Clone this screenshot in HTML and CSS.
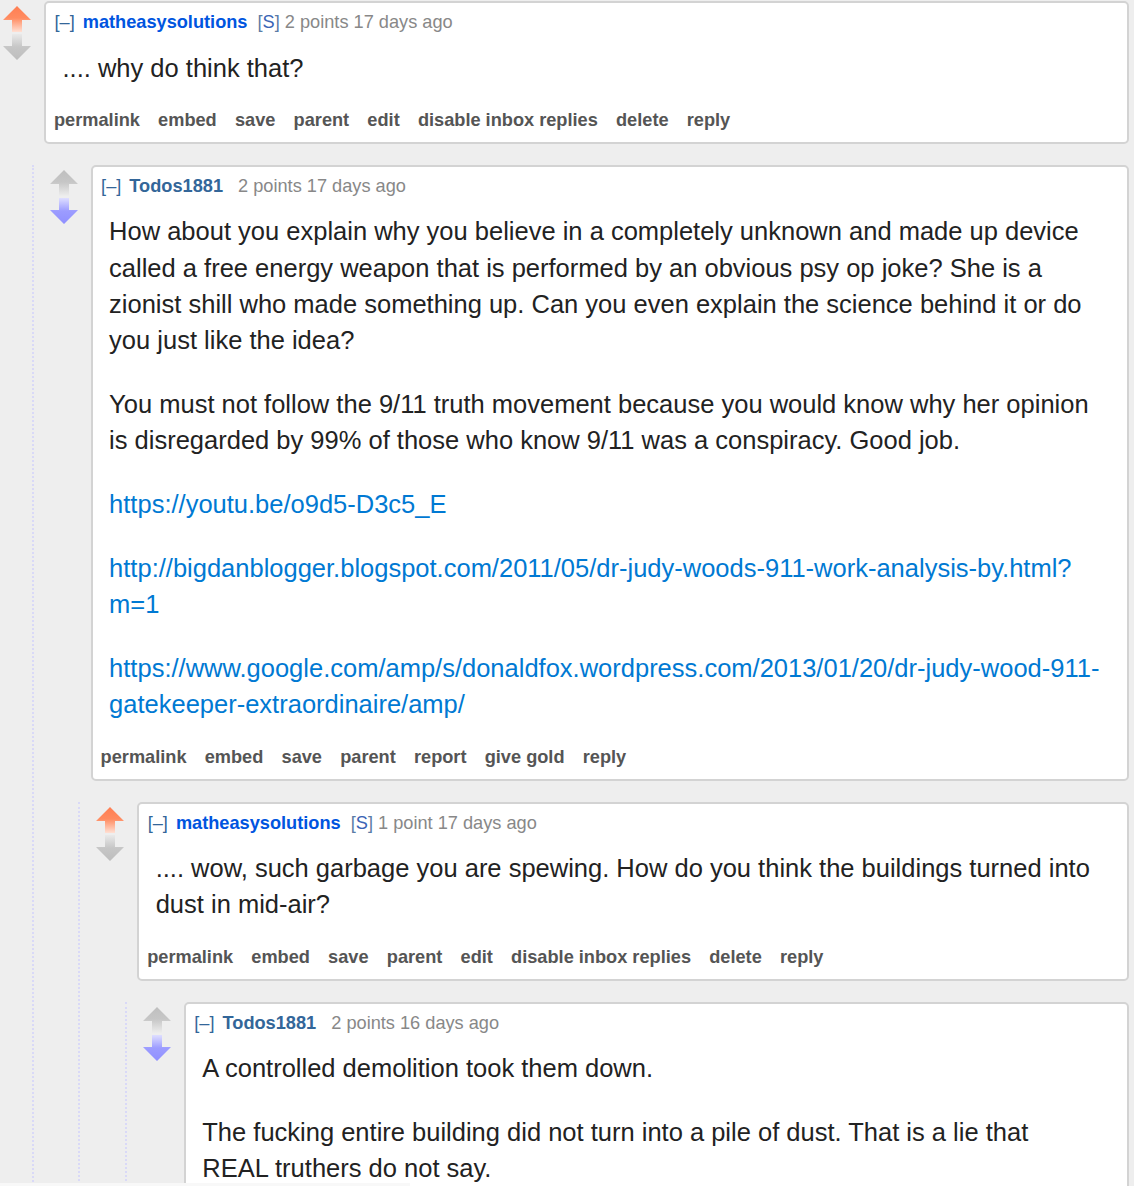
FILE: index.html
```html
<!DOCTYPE html>
<html lang="en">
<head>
<meta charset="utf-8">
<title>comments</title>
<link rel="stylesheet" href="styles.css">
</head>
<body>
<svg class="defs" width="0" height="0" aria-hidden="true">
  <defs>
    <linearGradient id="upOrange" gradientUnits="userSpaceOnUse" x1="0" y1="0" x2="0" y2="30">
      <stop offset="0" stop-color="#ff7b4f"/>
      <stop offset="0.5" stop-color="#ff8b60"/>
      <stop offset="1" stop-color="#ffe6dc"/>
    </linearGradient>
    <linearGradient id="upGray" gradientUnits="userSpaceOnUse" x1="0" y1="0" x2="0" y2="30">
      <stop offset="0" stop-color="#bdbdbd"/>
      <stop offset="0.5" stop-color="#c6c6c6"/>
      <stop offset="1" stop-color="#f0f0f0"/>
    </linearGradient>
    <linearGradient id="downGray" gradientUnits="userSpaceOnUse" x1="0" y1="30" x2="0" y2="58">
      <stop offset="0" stop-color="#ececec"/>
      <stop offset="0.5" stop-color="#c6c6c6"/>
      <stop offset="1" stop-color="#bdbdbd"/>
    </linearGradient>
    <linearGradient id="downBlue" gradientUnits="userSpaceOnUse" x1="0" y1="30" x2="0" y2="58">
      <stop offset="0" stop-color="#e4e4ff"/>
      <stop offset="0.5" stop-color="#9c9cff"/>
      <stop offset="1" stop-color="#8f8fff"/>
    </linearGradient>
  </defs>
</svg>

<div class="thread">
  <div class="comment">
    <div class="row">
      <div class="votes">
        <svg width="30" height="58" viewBox="0 0 30 58">
          <path d="M15 3 L29 17 L20 17 L20 29 L10 29 L10 17 L1 17 Z" fill="url(#upOrange)"/>
          <path d="M10 31 L20 31 L20 43 L29 43 L15 57 L1 43 L10 43 Z" fill="url(#downGray)"/>
        </svg>
      </div>
      <div class="card">
        <div class="tagline">
          <span class="expand">[–]</span><span class="author submitter">matheasysolutions</span><span class="attrs">[<span class="s">S</span>]</span> <span class="meta">2 points 17 days ago</span>
        </div>
        <div class="md">
          <p>.... why do think that?</p>
        </div>
        <ul class="buttons">
          <li>permalink</li><li>embed</li><li>save</li><li>parent</li><li>edit</li><li>disable inbox replies</li><li>delete</li><li>reply</li>
        </ul>
      </div>
    </div>

    <div class="child">
      <div class="comment">
        <div class="row">
          <div class="votes">
            <svg width="30" height="58" viewBox="0 0 30 58">
              <path d="M15 3 L29 17 L20 17 L20 29 L10 29 L10 17 L1 17 Z" fill="url(#upGray)"/>
              <path d="M10 31 L20 31 L20 43 L29 43 L15 57 L1 43 L10 43 Z" fill="url(#downBlue)"/>
            </svg>
          </div>
          <div class="card">
            <div class="tagline">
              <span class="expand">[–]</span><span class="author">Todos1881</span><span class="attrs empty"></span> <span class="meta">2 points 17 days ago</span>
            </div>
            <div class="md">
              <p>How about you explain why you believe in a completely unknown and made up device called a free energy weapon that is performed by an obvious psy op joke? She is a zionist shill who made something up. Can you even explain the science behind it or do you just like the idea?</p>
              <p>You must not follow the 9/11 truth movement because you would know why her opinion is disregarded by 99% of those who know 9/11 was a conspiracy. Good job.</p>
              <p><a href="#">https://youtu.be/o9d5-D3c5_E</a></p>
              <p><a href="#">http://bigdanblogger.blogspot.com/2011/05/dr-judy-woods-911-work-analysis-by.html?m=1</a></p>
              <p><a href="#">https://www.google.com/amp/s/donaldfox.wordpress.com/2013/01/20/dr-judy-wood-911-gatekeeper-extraordinaire/amp/</a></p>
            </div>
            <ul class="buttons">
              <li>permalink</li><li>embed</li><li>save</li><li>parent</li><li>report</li><li>give gold</li><li>reply</li>
            </ul>
          </div>
        </div>

        <div class="child">
          <div class="comment">
            <div class="row">
              <div class="votes">
                <svg width="30" height="58" viewBox="0 0 30 58">
                  <path d="M15 3 L29 17 L20 17 L20 29 L10 29 L10 17 L1 17 Z" fill="url(#upOrange)"/>
                  <path d="M10 31 L20 31 L20 43 L29 43 L15 57 L1 43 L10 43 Z" fill="url(#downGray)"/>
                </svg>
              </div>
              <div class="card">
                <div class="tagline">
                  <span class="expand">[–]</span><span class="author submitter">matheasysolutions</span><span class="attrs">[<span class="s">S</span>]</span> <span class="meta">1 point 17 days ago</span>
                </div>
                <div class="md">
                  <p>.... wow, such garbage you are spewing. How do you think the buildings turned into dust in mid-air?</p>
                </div>
                <ul class="buttons">
                  <li>permalink</li><li>embed</li><li>save</li><li>parent</li><li>edit</li><li>disable inbox replies</li><li>delete</li><li>reply</li>
                </ul>
              </div>
            </div>

            <div class="child">
              <div class="comment">
                <div class="row">
                  <div class="votes">
                    <svg width="30" height="58" viewBox="0 0 30 58">
                      <path d="M15 3 L29 17 L20 17 L20 29 L10 29 L10 17 L1 17 Z" fill="url(#upGray)"/>
                      <path d="M10 31 L20 31 L20 43 L29 43 L15 57 L1 43 L10 43 Z" fill="url(#downBlue)"/>
                    </svg>
                  </div>
                  <div class="card">
                    <div class="tagline">
                      <span class="expand">[–]</span><span class="author">Todos1881</span><span class="attrs empty"></span> <span class="meta">2 points 16 days ago</span>
                    </div>
                    <div class="md">
                      <p>A controlled demolition took them down.</p>
                      <p>The fucking entire building did not turn into a pile of dust. That is a lie that REAL truthers do not say.</p>
                    </div>
                    <ul class="buttons">
                      <li>permalink</li><li>embed</li><li>save</li><li>parent</li><li>report</li><li>give gold</li><li>reply</li>
                    </ul>
                  </div>
                </div>
              </div>
            </div>
          </div>
        </div>
      </div>
    </div>
  </div>
</div>
<div class="scrollhint"></div>
</body>
</html>
```

FILE: styles.css
```css
html, body {
  margin: 0;
  padding: 0;
  background: #eeeeee;
}

body {
  font-family: "Liberation Sans", Arial, sans-serif;
  color: #222;
  padding: 1px 5px 0 2px;
  overflow: hidden;
  height: 1186px;
  box-sizing: border-box;
}

.defs {
  position: absolute;
  width: 0;
  height: 0;
}

.row {
  display: flex;
  align-items: flex-start;
}

.votes {
  flex: 0 0 42px;
  width: 42px;
  padding-top: 2px;
}

.votes svg {
  display: block;
}

.card {
  flex: 1 1 auto;
  min-width: 0;
  background: #fff;
  border: 2px solid #d3d3d3;
  border-radius: 5px;
  padding: 6px 8px 9px 8.5px;
}

.tagline {
  font-size: 18.2px;
  line-height: 26px;
  color: #888;
  white-space: nowrap;
}

.expand {
  color: #369;
  margin-right: 8px;
}

.author {
  color: #369;
  font-weight: bold;
}

.author.submitter {
  color: #0055df;
}

.attrs {
  color: #5b7ca6;
  margin-left: 10px;
}

.attrs .s {
  color: #3a64b5;
}

.attrs.empty {
  margin-left: 10px;
}

.md {
  padding: 14.5px 19px 0 8px;
  font-size: 25.5px;
  line-height: 36.3px;
  color: #222;
}

.md p {
  margin: 0 0 27.5px 0;
}

.md p:last-child {
  margin-bottom: 0;
}

.md a {
  color: #0079d3;
  text-decoration: none;
}

.buttons {
  list-style: none;
  margin: 21px 0 0 -0.5px;
  padding: 0;
  display: flex;
  gap: 18.2px;
  font-size: 18.2px;
  line-height: 26px;
  font-weight: bold;
  color: #555;
  white-space: nowrap;
}

.child {
  margin: 21px 0 0 29.6px;
  border-left: 2px dotted #d9d9f7;
  padding-left: 15px;
}

.scrollhint {
  position: fixed;
  left: 0;
  bottom: 0;
  width: 410px;
  height: 3px;
  background: #f8f8f8;
}
```
